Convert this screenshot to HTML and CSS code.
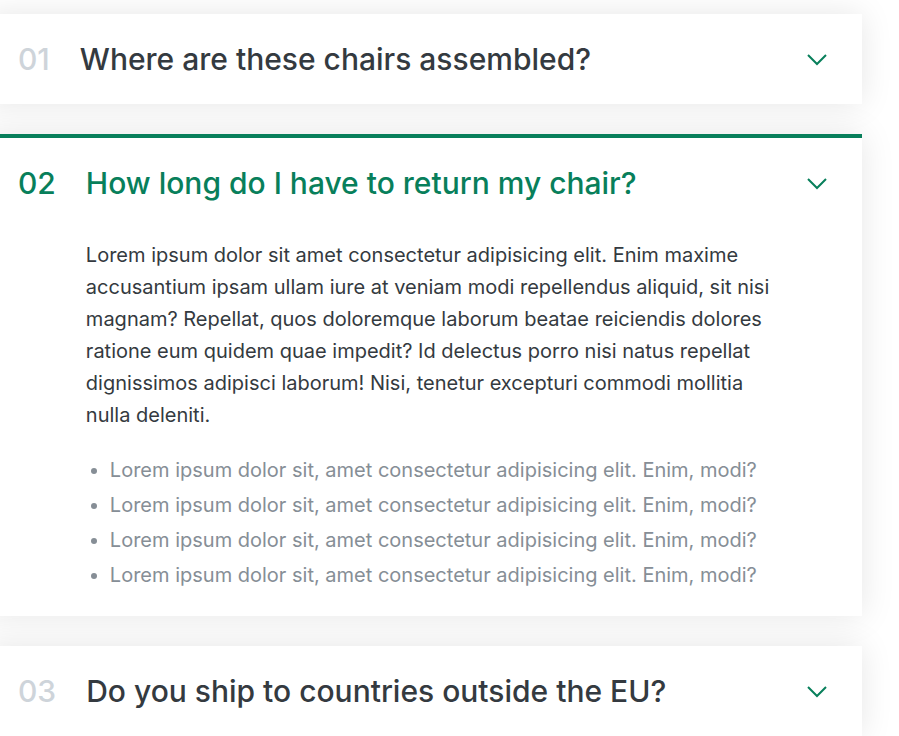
FILE: index.html
```html
<!DOCTYPE html>
<html lang="en">
<head>
<meta charset="utf-8">
<title>FAQ</title>
<link rel="stylesheet" href="styles.css">
</head>
<body>
<div class="accordion">
  <div class="item">
    <p class="number">01</p>
    <p class="text">Where are these chairs assembled?</p>
    <svg class="icon" viewBox="0 0 24 24" fill="none"><path d="M2 8l9 9 9-9"/></svg>
  </div>
  <div class="item open">
    <p class="number">02</p>
    <p class="text">How long do I have to return my chair?</p>
    <svg class="icon" viewBox="0 0 24 24" fill="none"><path d="M2 8l9 9 9-9"/></svg>
    <div class="hidden-box">
      <p>Lorem ipsum dolor sit amet consectetur adipisicing elit. Enim maxime accusantium ipsam ullam iure at veniam modi repellendus aliquid, sit nisi magnam? Repellat, quos doloremque laborum beatae reiciendis dolores ratione eum quidem quae impedit? Id delectus porro nisi natus repellat dignissimos adipisci laborum! Nisi, tenetur excepturi commodi mollitia nulla deleniti.</p>
      <ul>
        <li>Lorem ipsum dolor sit, amet consectetur adipisicing elit. Enim, modi?</li>
        <li>Lorem ipsum dolor sit, amet consectetur adipisicing elit. Enim, modi?</li>
        <li>Lorem ipsum dolor sit, amet consectetur adipisicing elit. Enim, modi?</li>
        <li>Lorem ipsum dolor sit, amet consectetur adipisicing elit. Enim, modi?</li>
      </ul>
    </div>
  </div>
  <div class="item">
    <p class="number">03</p>
    <p class="text">Do you ship to countries outside the EU?</p>
    <svg class="icon" viewBox="0 0 24 24" fill="none"><path d="M2 8l9 9 9-9"/></svg>
  </div>
</div>
</body>
</html>
```

FILE: styles.css
```css
* {
  margin: 0;
  padding: 0;
  box-sizing: border-box;
}

body {
  font-family: Inter, "Noto Sans", sans-serif;
  color: #343a40;
  background: #fff;
}

.accordion {
  width: 876px;
  margin-left: -14px;
  padding-top: 14px;
  display: flex;
  flex-direction: column;
  gap: 30px;
}

.item {
  background: #fff;
  box-shadow: 0 0 32px rgba(0, 0, 0, 0.1);
  padding: 27px 32px;
  display: grid;
  grid-template-columns: auto 1fr 24px;
  column-gap: 30px;
  align-items: center;
}

.number,
.text {
  font-size: 30px;
  font-weight: 500;
  line-height: 36px;
}

.number {
  color: #ced4da;
}

.icon {
  width: 24px;
  height: 24px;
  stroke: #087f5b;
  stroke-width: 2;
}

.open {
  border-top: 4px solid #087f5b;
  padding-bottom: 29px;
}

.open .number,
.open .text {
  color: #087f5b;
}

.hidden-box {
  grid-column: 2;
  padding-top: 38px;
  font-size: 20px;
}

.hidden-box p {
  line-height: 32px;
  margin-bottom: 28px;
}

.hidden-box ul {
  color: #868e96;
  padding-left: 24px;
  display: flex;
  flex-direction: column;
  gap: 12px;
}

.hidden-box li {
  line-height: 23px;
}
```
